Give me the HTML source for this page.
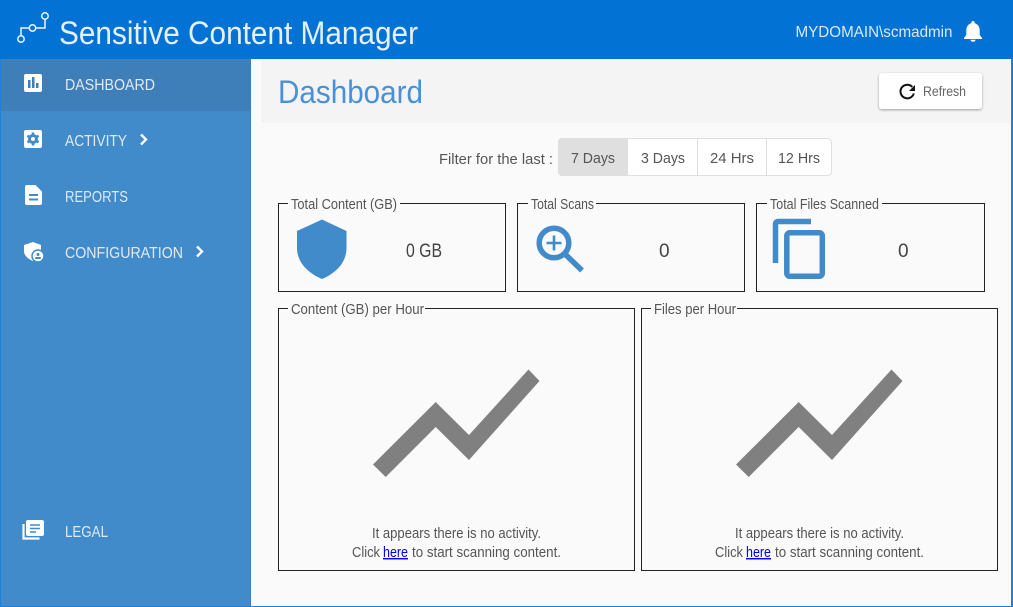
<!DOCTYPE html>
<html lang="en">
<head>
<meta charset="utf-8">
<title>Sensitive Content Manager</title>
<style>
html,body{margin:0;padding:0;width:1013px;height:607px;overflow:hidden;background:#fafafa}
svg{display:block;position:absolute;left:0;top:0}
text{font-family:"Liberation Sans",sans-serif;}
.n{fill:#dfeaf6;font-size:16px}
.d{fill:#555;font-size:15px}
.l{fill:#555;font-size:14.5px}
</style>
</head>
<body>
<svg width="1013" height="607" viewBox="0 0 1013 607" xmlns="http://www.w3.org/2000/svg">
<defs>
<filter id="sh" x="-10%" y="-20%" width="120%" height="150%"><feDropShadow dx="0" dy="1" stdDeviation="1.3" flood-color="#000" flood-opacity=".35"/></filter>
</defs>
<rect width="1013" height="607" fill="#fafafa"/>
<rect x="261" y="59" width="749" height="64" fill="#f4f4f4"/>
<!-- sidebar -->
<rect x="0" y="59" width="251" height="548" fill="#428bca"/>
<rect x="250" y="59" width="1" height="548" fill="#3b7fb9"/>
<rect x="0" y="59" width="251" height="52" fill="#3f7fb9"/>
<!-- window border -->
<rect x="0" y="0" width="1" height="607" fill="#1a82dc"/>
<rect x="1011" y="0" width="2" height="607" fill="#1a82dc"/>
<rect x="0" y="606" width="1013" height="1" fill="#1a82dc"/>
<!-- header -->
<rect x="0" y="0" width="1013" height="59" fill="#0273d4"/>
<g fill="none" stroke="#eef5fc" stroke-width="1.5">
<circle cx="21" cy="39" r="3.2"/><circle cx="32.500" cy="28" r="3.200"/><circle cx="45" cy="16" r="3.200"/>
<path d="M21 35.800V28H29.300M35.700 28H45V19.200"/>
</g>
<text x="59" y="44" font-size="32" fill="#e6f0fa" textLength="359" lengthAdjust="spacingAndGlyphs">Sensitive Content Manager</text>
<text x="795.500" y="37" font-size="16" fill="#d8e8f7" textLength="157" lengthAdjust="spacingAndGlyphs">MYDOMAIN\scmadmin</text>
<path d="M973 21c1 0 1.700.7 1.700 1.700v.6c3.300.8 5 3.700 5 7v3.500c0 1.700 1 2.700 2.300 4v1.200h-18v-1.200c1.300-1.300 2.300-2.300 2.300-4v-3.500c0-3.300 1.700-6.200 5-7v-.6c0-1 .7-1.700 1.700-1.700z" fill="#fff"/>
<path d="M970.500 39.800h5c0 1.300-1.100 2-2.500 2s-2.500-.7-2.500-2z" fill="#fff"/>
<!-- nav icons -->
<rect x="24" y="74" width="18" height="18" rx="2" fill="#fff"/>
<g fill="#3f7fb9"><rect x="28" y="80" width="2.500" height="8"/><rect x="32" y="77" width="2.500" height="11"/><rect x="36" y="83" width="2.500" height="5"/></g>
<rect x="24" y="130" width="18" height="18" rx="2" fill="#fff"/>
<circle cx="33" cy="139" r="5" fill="#428bca"/>
<g stroke="#428bca" stroke-width="2.600"><path d="M33 132.500v13M27.400 135.800l11.200 6.400M27.400 142.200l11.200-6.400"/></g>
<circle cx="33" cy="139" r="2" fill="#fff"/>
<path d="M25 187a2 2 0 0 1 2-2h8.500l6.500 6.500V203a2 2 0 0 1-2 2H27a2 2 0 0 1-2-2z" fill="#fff"/>
<path d="M29 195h9M29 199.500h9" stroke="#428bca" stroke-width="2"/>
<path d="M33 242l8 3v6c0 4.500-3.500 8-8 10-5-2-9-5.500-9-10v-6z" fill="#fff"/>
<circle cx="38" cy="256" r="6" fill="#fff" stroke="#428bca" stroke-width="1.500"/>
<circle cx="38" cy="254.500" r="1.500" fill="#428bca"/><rect x="35" y="257" width="6" height="2" rx="1" fill="#428bca"/>
<rect x="26" y="520" width="18" height="16" rx="2" fill="#fff"/>
<path d="M30 525h10M30 528.500h10M30 532h6" stroke="#428bca" stroke-width="1.600"/>
<path d="M23.500 524v14.500h16" fill="none" stroke="#fff" stroke-width="2.200"/>
<text class="n" x="65" y="90" textLength="90" lengthAdjust="spacingAndGlyphs">DASHBOARD</text>
<text class="n" x="65" y="146" textLength="62" lengthAdjust="spacingAndGlyphs">ACTIVITY</text>
<text class="n" x="65" y="202" textLength="63" lengthAdjust="spacingAndGlyphs">REPORTS</text>
<text class="n" x="65" y="258" textLength="118" lengthAdjust="spacingAndGlyphs">CONFIGURATION</text>
<text class="n" x="65" y="537" textLength="43" lengthAdjust="spacingAndGlyphs">LEGAL</text>
<path d="M141 134.500l5 5-5 5M197 246.500l5 5-5 5" fill="none" stroke="#fff" stroke-width="2.400"/>
<!-- page title -->
<text x="278" y="103" font-size="32" fill="#4a90d6" textLength="145" lengthAdjust="spacingAndGlyphs">Dashboard</text>
<rect x="879" y="73" width="103" height="36" rx="3" fill="#fff" filter="url(#sh)"/>
<path d="M913.800 93.500a6.800 6.800 0 1 1-1.500-6.600" fill="none" stroke="#111" stroke-width="2"/>
<path d="M915 85v6h-6z" fill="#111"/>
<text x="923" y="96" font-size="13.500" fill="#666" textLength="43" lengthAdjust="spacingAndGlyphs">Refresh</text>
<!-- filter -->
<text class="d" x="439" y="164" textLength="114" lengthAdjust="spacingAndGlyphs">Filter for the last :</text>
<rect x="558.500" y="138.500" width="273" height="37" rx="4" fill="#fff" stroke="#dfdfdf"/>
<path d="M628 138H562a4 4 0 0 0-4 4v30a4 4 0 0 0 4 4h66z" fill="#dfdfdf"/>
<path d="M697.500 138v38M766.500 138v38" stroke="#dfdfdf"/>
<text class="d" x="571" y="163" textLength="44" lengthAdjust="spacingAndGlyphs">7 Days</text>
<text class="d" x="641" y="163" textLength="44" lengthAdjust="spacingAndGlyphs">3 Days</text>
<text class="d" x="710" y="163" textLength="44" lengthAdjust="spacingAndGlyphs">24 Hrs</text>
<text class="d" x="778" y="163" textLength="42" lengthAdjust="spacingAndGlyphs">12 Hrs</text>
<!-- stat boxes -->
<g fill="none" stroke="#222" stroke-width="1">
<rect x="278.500" y="203.500" width="227" height="88"/>
<rect x="517.500" y="203.500" width="227" height="88"/>
<rect x="756.500" y="203.500" width="228" height="88"/>
<rect x="278.500" y="308.500" width="356" height="262"/>
<rect x="641.500" y="308.500" width="356" height="262"/>
</g>
<g fill="#fafafa">
<rect x="288" y="200" width="112" height="8"/>
<rect x="528" y="200" width="68" height="8"/>
<rect x="767" y="200" width="115" height="8"/>
<rect x="288" y="305" width="137" height="8"/>
<rect x="651" y="305" width="86" height="8"/>
</g>
<text class="l" x="291" y="209" textLength="106" lengthAdjust="spacingAndGlyphs">Total Content (GB)</text>
<text class="l" x="531" y="209" textLength="63" lengthAdjust="spacingAndGlyphs">Total Scans</text>
<text class="l" x="770" y="209" textLength="109" lengthAdjust="spacingAndGlyphs">Total Files Scanned</text>
<text class="l" x="291" y="314" textLength="133" lengthAdjust="spacingAndGlyphs">Content (GB) per Hour</text>
<text class="l" x="654" y="314" textLength="82" lengthAdjust="spacingAndGlyphs">Files per Hour</text>
<!-- shield -->
<path d="M322 219.500l24.500 11.500v17c0 14-10 25-24.500 31-14.500-6-25-17-25-31v-17z" fill="#428bca"/>
<!-- search -->
<circle cx="554" cy="243" r="14.800" fill="none" stroke="#428bca" stroke-width="5.500"/>
<path d="M554 235.500v15M546.500 243h15" stroke="#428bca" stroke-width="2.600"/>
<path d="M566 255l16 15.500" stroke="#428bca" stroke-width="5.500"/>
<!-- copy -->
<path d="M811 221.500H778a2.500 2.500 0 0 0-2.500 2.500v39" fill="none" stroke="#428bca" stroke-width="5.500"/>
<rect x="786.800" y="232.800" width="35.500" height="43.500" rx="3" fill="none" stroke="#428bca" stroke-width="5.500"/>
<!-- values -->
<text x="406" y="257" font-size="19" fill="#444" textLength="36" lengthAdjust="spacingAndGlyphs">0 GB</text>
<text x="659" y="257" font-size="19" fill="#444">0</text>
<text x="898" y="257" font-size="19" fill="#444">0</text>
<!-- charts -->
<path d="M373 464.500L435.700 402 469 435 528.500 369.500 539.500 381 469 460 435.700 427 385.700 477z" fill="#808080"/>
<path d="M736 464.500L798.700 402 832 435 891.500 369.500 902.500 381 832 460 798.700 427 748.700 477z" fill="#808080"/>
<text class="l" x="372" y="538" textLength="169" lengthAdjust="spacingAndGlyphs">It appears there is no activity.</text>
<text class="l" x="352" y="557" textLength="28" lengthAdjust="spacingAndGlyphs">Click</text>
<text x="383" y="557" font-size="14.500" fill="#0000ee" text-decoration="underline" textLength="25" lengthAdjust="spacingAndGlyphs">here</text>
<text class="l" x="412" y="557" textLength="149" lengthAdjust="spacingAndGlyphs">to start scanning content.</text>
<text class="l" x="735" y="538" textLength="169" lengthAdjust="spacingAndGlyphs">It appears there is no activity.</text>
<text class="l" x="715" y="557" textLength="28" lengthAdjust="spacingAndGlyphs">Click</text>
<text x="746" y="557" font-size="14.500" fill="#0000ee" text-decoration="underline" textLength="25" lengthAdjust="spacingAndGlyphs">here</text>
<text class="l" x="775" y="557" textLength="149" lengthAdjust="spacingAndGlyphs">to start scanning content.</text>
</svg>
</body>
</html>
